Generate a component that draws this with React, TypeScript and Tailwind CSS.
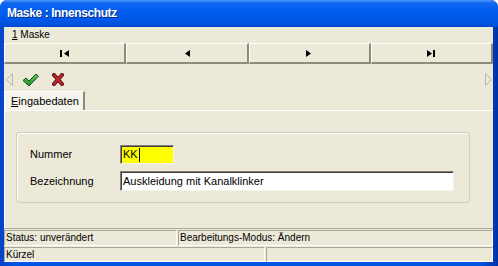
import React from "react";

function NavGlyph({ kind }: { kind: "first" | "prev" | "next" | "last" }) {
  if (kind === "first")
    return (
      <svg width="10" height="7" viewBox="0 0 10 7">
        <rect x="0" y="0" width="2" height="7" fill="#000" />
        <polygon points="9,0 9,7 4,3.5" fill="#000" />
      </svg>
    );
  if (kind === "prev")
    return (
      <svg width="6" height="7" viewBox="0 0 6 7">
        <polygon points="6,0 6,7 1,3.5" fill="#000" />
      </svg>
    );
  if (kind === "next")
    return (
      <svg width="6" height="7" viewBox="0 0 6 7">
        <polygon points="0,0 0,7 5,3.5" fill="#000" />
      </svg>
    );
  return (
    <svg width="10" height="7" viewBox="0 0 10 7">
      <polygon points="1,0 1,7 6,3.5" fill="#000" />
      <rect x="7" y="0" width="2" height="7" fill="#000" />
    </svg>
  );
}

function NavButton({ kind }: { kind: "first" | "prev" | "next" | "last" }) {
  return (
    <div className="flex items-center justify-center border-t border-l border-t-white border-l-white border-b-2 border-r-2 border-b-[#8E8B7C] border-r-[#8E8B7C] bg-[#ECE9D8]">
      <NavGlyph kind={kind} />
    </div>
  );
}

function CheckIcon() {
  return (
    <svg width="17" height="14" viewBox="0 0 17 14">
      <defs>
        <linearGradient id="gck" x1="0" y1="0" x2="0" y2="1">
          <stop offset="0" stopColor="#5FD25B" />
          <stop offset="1" stopColor="#1E8A24" />
        </linearGradient>
      </defs>
      <path
        d="M1 7.5 L4 5 L7 8 L14 1 L16.3 3.3 L7 13 Z"
        fill="url(#gck)"
        stroke="#0E4F14"
        strokeWidth="1"
        strokeLinejoin="round"
      />
    </svg>
  );
}

function CrossIcon() {
  return (
    <svg width="12" height="13" viewBox="0 0 12 13">
      <path d="M2 2 L10 11 M10 2 L2 11" stroke="#5A0A0E" strokeWidth="4" strokeLinecap="round" />
      <path d="M2 2 L10 11 M10 2 L2 11" stroke="#C0272D" strokeWidth="2.2" strokeLinecap="round" />
    </svg>
  );
}

export default function App() {
  return (
    <div className="w-[498px] h-[266px] overflow-hidden flex flex-col rounded-t-[7px] bg-[linear-gradient(to_right,#0842C8,#0054E3_3%,#0054E3_96%,#0033A8)] font-['Liberation_Sans',Arial,sans-serif] text-black">
      {/* Title bar */}
      <div className="h-[27px] shrink-0 flex items-center pl-[7px] pb-[1px] rounded-t-[7px] bg-[linear-gradient(to_bottom,#4A97FA_0%,#0F66F0_12%,#005CEE_45%,#0057E6_80%,#004AD2_100%)]">
        <span className="text-white font-bold text-[12px] tracking-[-0.4px] leading-none [text-shadow:1px_1px_0_#0A2C8A]">
          Maske : Innenschutz
        </span>
      </div>

      {/* Body */}
      <div className="flex-1 flex flex-col ml-[4px] mr-[5px] bg-[#ECE9D8]">
        {/* Menu */}
        <div className="h-[16px] shrink-0 flex items-center pl-[8px] text-[10px] leading-none">
          <span>
            <span className="underline">1</span> Maske
          </span>
        </div>

        {/* Nav buttons */}
        <div className="h-[21px] shrink-0 grid grid-cols-4">
          <NavButton kind="first" />
          <NavButton kind="prev" />
          <NavButton kind="next" />
          <NavButton kind="last" />
        </div>

        {/* Toolbar */}
        <div className="h-[27px] shrink-0 flex items-center pl-[2px] pr-[1px] pt-[4px]">
          <svg width="7" height="13" viewBox="0 0 7 13">
            <polygon points="6.5,0.5 6.5,12.5 0.5,6.5" fill="none" stroke="#B9B7AC" strokeWidth="1" />
          </svg>
          <div className="ml-[9px]">
            <CheckIcon />
          </div>
          <div className="ml-[13px]">
            <CrossIcon />
          </div>
          <div className="flex-1" />
          <svg width="7" height="13" viewBox="0 0 7 13">
            <polygon points="0.5,0.5 0.5,12.5 6.5,6.5" fill="none" stroke="#B9B7AC" strokeWidth="1" />
          </svg>
        </div>

        {/* Tab header */}
        <div className="h-[19px] shrink-0 flex items-end">
          <div className="h-[19px] w-[81px] flex items-center pl-[6px] bg-[#F4F3EC] border-t border-l border-t-white border-l-white border-r-2 border-r-[#8E8B7C] rounded-tl-[2px] text-[11px] leading-none">
            <span>
              <span className="underline">E</span>ingabedaten
            </span>
          </div>
        </div>

        {/* Tab panel */}
        <div className="flex-1 border-t border-t-white border-l border-l-white pt-[21px] pl-[11px] pr-[23px] pb-[25px] flex flex-col">
          <div className="flex-1 border border-[#D0CEBF] rounded-[3px] shadow-[inset_1px_1px_0_#FFFFFF] pt-[12px] pl-[13px] flex flex-col gap-[7px]">
            <div className="flex items-center h-[19px]">
              <span className="w-[90px] text-[11px] leading-none">Nummer</span>
              <div className="h-[19px] w-[54px] bg-[#FFFF00] border-t border-l border-t-[#808080] border-l-[#808080] border-b border-r border-b-[#F4F3EC] border-r-[#F4F3EC] shadow-[inset_1px_1px_0_#404040] flex items-center pl-[2px] text-[11px] leading-none">
                <span>KK</span>
                <span className="w-[1px] h-[14px] bg-black ml-[1px]" />
              </div>
            </div>
            <div className="flex items-center h-[20px]">
              <span className="w-[90px] text-[11px] leading-none">Bezeichnung</span>
              <div className="h-[20px] w-[334px] bg-white border-t border-l border-t-[#808080] border-l-[#808080] border-b border-r border-b-[#F4F3EC] border-r-[#F4F3EC] shadow-[inset_1px_1px_0_#404040] flex items-center pl-[2px] text-[11px] leading-none">
                Auskleidung mit Kanalklinker
              </div>
            </div>
          </div>
        </div>

        {/* Status bar row 1 */}
        <div className="h-[18px] shrink-0 flex border-t border-t-[#ACA899] pt-[1px] text-[10px] leading-none">
          <div className="w-[173px] flex items-center pl-[1px] border-t border-l border-t-[#ACA899] border-l-[#ACA899] border-b border-r border-b-white border-r-white">
            Status: unverändert
          </div>
          <div className="flex-1 ml-[1px] flex items-center pl-[1px] border-t border-l border-t-[#ACA899] border-l-[#ACA899] border-b border-r border-b-white border-r-white">
            Bearbeitungs-Modus: Ändern
          </div>
        </div>

        {/* Status bar row 2 */}
        <div className="h-[16px] shrink-0 flex pt-[1px] text-[10px] leading-none">
          <div className="w-[261px] flex items-center pl-[1px] border-t border-l border-t-[#ACA899] border-l-[#ACA899] border-b border-r border-b-white border-r-white">
            Kürzel
          </div>
          <div className="flex-1 ml-[1px] border-t border-l border-t-[#ACA899] border-l-[#ACA899] border-b border-r border-b-white border-r-white" />
        </div>
      </div>
      <div className="h-[4px] shrink-0" />
    </div>
  );
}
